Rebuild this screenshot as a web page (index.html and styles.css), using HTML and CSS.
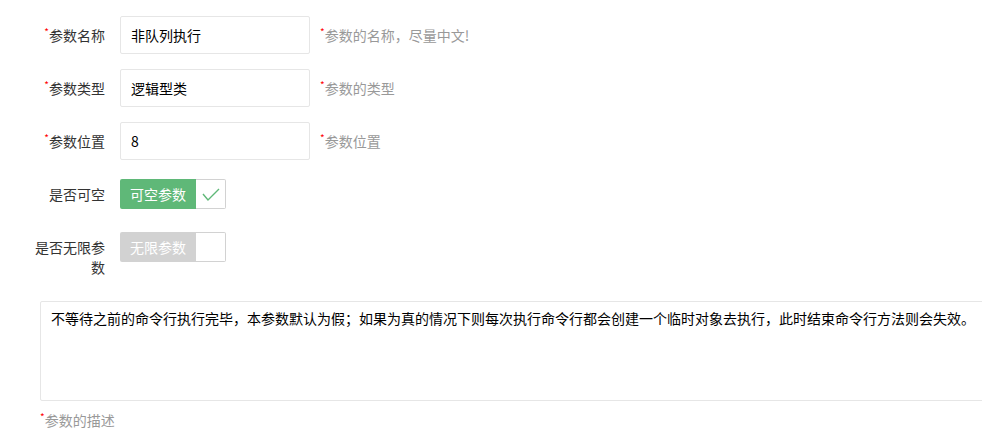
FILE: index.html
```html
<!DOCTYPE html>
<html lang="zh-CN">
<head>
  <meta charset="UTF-8">
  <meta name="viewport" content="width=device-width, initial-scale=1.0">
  <title>参数编辑</title>
  <link rel="stylesheet" href="styles.css">
</head>
<body>
  <form class="form">
    <div class="form-item">
      <label class="form-label"><span class="req">*</span>参数名称</label>
      <div class="input-inline"><input class="input" type="text" value="非队列执行"></div>
      <div class="word-aux"><span class="req">*</span>参数的名称，尽量中文!</div>
    </div>

    <div class="form-item">
      <label class="form-label"><span class="req">*</span>参数类型</label>
      <div class="input-inline"><input class="input" type="text" value="逻辑型类"></div>
      <div class="word-aux"><span class="req">*</span>参数的类型</div>
    </div>

    <div class="form-item">
      <label class="form-label"><span class="req">*</span>参数位置</label>
      <div class="input-inline"><input class="input" type="text" value="8"></div>
      <div class="word-aux"><span class="req">*</span>参数位置</div>
    </div>

    <div class="form-item">
      <label class="form-label">是否可空</label>
      <div class="input-block">
        <div class="checkbox checked">
          <span>可空参数</span>
          <i class="check-icon">
            <svg width="30" height="28" viewBox="0 0 30 28"><polyline points="7,14 12,20 23,9" fill="none" stroke="#5FB878" stroke-width="1.4"/></svg>
          </i>
        </div>
      </div>
    </div>

    <div class="form-item">
      <label class="form-label">是否无限参数</label>
      <div class="input-block">
        <div class="checkbox">
          <span>无限参数</span>
          <i class="check-icon"></i>
        </div>
      </div>
    </div>

    <div class="form-text">
      <textarea class="textarea">不等待之前的命令行执行完毕，本参数默认为假；如果为真的情况下则每次执行命令行都会创建一个临时对象去执行，此时结束命令行方法则会失效。</textarea>
      <div class="word-aux"><span class="req">*</span>参数的描述</div>
    </div>
  </form>
</body>
</html>
```

FILE: styles.css
```css
html, body {
  margin: 0;
  overflow: hidden;
}
body {
  font-family: "Noto Sans CJK SC", "Liberation Sans", sans-serif;
  font-size: 14px;
  color: #333;
  background: #fff;
}
.form {
  padding: 16px 0 0 10px;
}
.form-item {
  display: flex;
  align-items: flex-start;
  margin-bottom: 15px;
}
.form-label {
  box-sizing: content-box;
  width: 80px;
  height: auto;
  padding: 9px 15px;
  line-height: 20px;
  text-align: right;
  flex-shrink: 0;
}
.req {
  color: #ff0000;
  font-size: 10px;
  line-height: 1;
  vertical-align: top;
  position: relative;
  top: 2px;
}
.input-inline {
  width: 190px;
  margin-right: 10px;
}
.input {
  box-sizing: border-box;
  display: block;
  width: 100%;
  height: 38px;
  padding: 0 10px;
  border: 1px solid #e6e6e6;
  border-radius: 2px;
  font: inherit;
  color: #000;
  outline: none;
}
.word-aux {
  padding: 9px 0;
  line-height: 20px;
  color: #999;
}
.input-block {
  padding-top: 4px;
}
.checkbox {
  display: flex;
  height: 30px;
  line-height: 30px;
}
.checkbox span {
  padding: 0 10px;
  background: #d2d2d2;
  color: #fff;
  border-radius: 2px 0 0 2px;
}
.checkbox.checked span {
  background: #5FB878;
}
.check-icon {
  box-sizing: border-box;
  width: 30px;
  height: 30px;
  border: 1px solid #d2d2d2;
  border-left: none;
  border-radius: 0 2px 2px 0;
}
.check-icon svg {
  display: block;
}
.form-text {
  padding-left: 30px;
}
.textarea {
  box-sizing: border-box;
  display: block;
  width: 1000px;
  height: 100px;
  padding: 6px 10px;
  line-height: 20px;
  border: 1px solid #e6e6e6;
  border-radius: 2px;
  font: inherit;
  color: #000;
  resize: none;
  outline: none;
}
```
